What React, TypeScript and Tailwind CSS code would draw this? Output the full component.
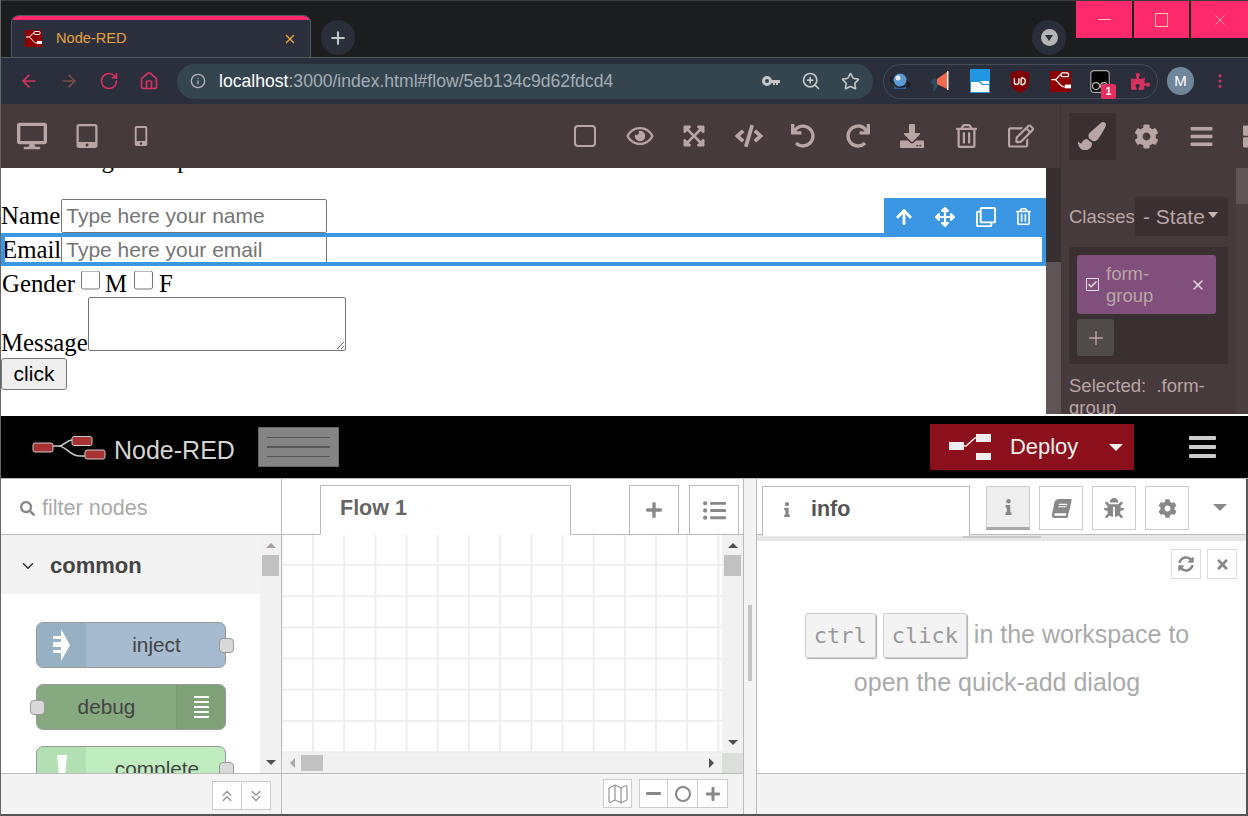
import type { ReactNode } from "react";
import { ArrowLeft, ArrowRight, RotateCw, House, Info, ZoomIn, Star, X, Plus, MoreVertical, ChevronDown, ChevronsUp, ChevronsDown, Map as MapIcon, Check } from "lucide-react";
import {
    FaDesktop, FaTabletAlt, FaMobileAlt, FaRegEye, FaExpandArrowsAlt, FaCode, FaUndo, FaRedo, FaDownload, FaRegTrashAlt,
    FaRegEdit, FaPaintBrush, FaCog, FaBars, FaThLarge, FaArrowUp, FaArrowsAlt, FaRegClone, FaPuzzlePiece, FaSearch,
    FaInfo, FaBook, FaBug, FaSyncAlt, FaTimes, FaListUl, FaPlus, FaMinus,
} from "react-icons/fa";

function RedLogo({ size = 17 }: { size?: number }) {
    return (
        <svg width={size} height={size} viewBox="0 0 17 17">
            <rect width="17" height="17" rx="1" fill="#8f0000" />
            <path d="M1 7h3c2 0 3-4 5-4M4 7c2 0 4 6 8 6" stroke="#fff" strokeWidth="1" fill="none" />
            <rect x="9" y="1.5" width="6" height="3" rx="1" fill="#8f0000" stroke="#fff" />
            <rect x="12" y="11" width="5" height="3" fill="#fff" />
        </svg>
    );
}

function ToolIcon({ children }: { children: ReactNode }) {
    return <div className="flex w-[54.5px] shrink-0 items-center justify-center text-[#b9a5a6]">{children}</div>;
}

function Ext({ children }: { children: ReactNode }) {
    return <div className="relative flex h-full w-[40px] shrink-0 items-center justify-center">{children}</div>;
}

function TabBar() {
    return (
        <div className="flex h-[58px] items-end border-t border-[#3c3c3c] border-b border-b-[#55585e] pl-[10px]">
            <div className="flex h-[42px] w-[300px] flex-col overflow-hidden rounded-t-lg border border-b-0 border-[#55585e] bg-[#2c303c]">
                <div className="h-[4px] bg-[#ff2a6d]" />
                <div className="flex flex-1 items-center pl-[13px] pr-[13px]">
                    <RedLogo />
                    <span className="ml-[14px] text-[14.6px] text-[#e6a13c]">Node-RED</span>
                    <X className="ml-auto h-[14px] w-[14px] text-[#e6a13c]" strokeWidth={2.5} />
                </div>
            </div>
            <div className="mb-[2px] ml-[10px] flex h-[35px] w-[34px] items-center justify-center rounded-full bg-[#2a2e38]">
                <Plus className="h-[20px] w-[20px] text-[#c4c7c5]" strokeWidth={2.5} />
            </div>
            <div className="mb-[2px] ml-auto flex h-[35px] w-[34px] items-center justify-center rounded-full bg-[#2a2e38]">
                <div className="flex h-[17px] w-[17px] items-center justify-center rounded-full bg-[#b5b5b5]">
                    <div className="h-0 w-0 border-x-[4px] border-t-[6px] border-x-transparent border-t-[#2a2e38]" />
                </div>
            </div>
            <div className="mb-[19px] ml-[10px] flex h-[37px] gap-[2px] self-end">
                <div className="flex w-[56px] items-center justify-center bg-[#ff2a6d]">
                    <div className="h-px w-[13px] bg-[#ffc4a8]" />
                </div>
                <div className="flex w-[55px] items-center justify-center bg-[#ff2a6d]">
                    <div className="h-[14px] w-[13px] border border-[#ffc4a8]" />
                </div>
                <div className="flex w-[57px] items-center justify-center bg-[#ff2a6d]">
                    <X className="h-[18px] w-[18px] text-[#ffc4a8]" strokeWidth={1} />
                </div>
            </div>
        </div>
    );
}

function AddressBar() {
    return (
        <div className="flex h-[46px] items-center bg-[#2b2f3b]">
            <div className="flex w-[176px] shrink-0 gap-[20px] pl-[18px]">
                <ArrowLeft className="h-[20px] w-[20px] text-[#d6325f]" />
                <ArrowRight className="h-[20px] w-[20px] text-[#7a4c46]" />
                <RotateCw className="h-[20px] w-[20px] text-[#d6325f]" />
                <House className="h-[20px] w-[20px] text-[#d6325f]" />
            </div>
            <div className="flex h-[35px] w-[696px] shrink-0 items-center rounded-full bg-[#354550] pl-[13px] pr-[13px]">
                <Info className="h-[16px] w-[16px] text-[#b0b4b8]" />
                <span className="ml-[13px] text-[17.6px] text-[#a3adb5]">
                    <span className="text-white">localhost</span>:3000/index.html#flow/5eb134c9d62fdcd4
                </span>
                <svg className="ml-auto" width="18" height="12" viewBox="0 0 18 12">
                    <circle cx="5" cy="6" r="3.5" fill="none" stroke="#c4c7c5" strokeWidth="3" />
                    <path d="M9 5h9v3h-2v2h-2V8h-1v2h-2V8H9z" fill="#c4c7c5" />
                </svg>
                <ZoomIn className="ml-[21px] h-[20px] w-[20px] text-[#c4c7c5]" />
                <Star className="ml-[20px] h-[19px] w-[19px] text-[#c4c7c5]" />
            </div>
            <div className="ml-[10px] flex h-[35px] w-[275px] shrink-0 items-center rounded-full border border-[#454b58]">
                <div className="flex h-full -ml-[4px]">
                    <Ext>
                        <svg width="22" height="20" viewBox="0 0 22 20">
                            <ellipse cx="11" cy="11" rx="10" ry="3.5" fill="none" stroke="#1a1a1a" strokeWidth="1.5" transform="rotate(20 11 11)" />
                            <circle cx="11" cy="9" r="6.5" fill="#5a9bd5" />
                            <circle cx="9" cy="7" r="2.5" fill="#e8e8e8" />
                            <path d="M5 15c4 3 8 3 12 0v3H5z" fill="#2d5fa0" />
                        </svg>
                    </Ext>
                    <Ext>
                        <svg width="20" height="22" viewBox="0 0 20 22">
                            <path d="M0 12l4-4 4 2v5l-3 6H3l1-6z" fill="#2d4a63" />
                            <path d="M7 9l10-7v17L7 14z" fill="#f36a4f" />
                            <rect x="17" y="1" width="1.5" height="19" fill="#eee" />
                        </svg>
                    </Ext>
                    <Ext>
                        <svg width="20" height="24" viewBox="0 0 20 24">
                            <rect width="20" height="24" rx="1" fill="#2196e3" />
                            <path d="M1 13h8l3 3h7v7H1z" fill="#fff" />
                            <path d="M10 12l3 3h6v-3z" fill="#fff" />
                        </svg>
                    </Ext>
                    <Ext>
                        <svg width="18" height="23" viewBox="0 0 16 20">
                            <path d="M8 0l8 2v9c0 5-4 7-8 9-4-2-8-4-8-9V2z" fill="#800000" />
                            <path d="M3 7v4c0 2 4 2 4 0V7M9 7v6M9 7c5-1 5 6 0 6" stroke="#fff" strokeWidth="1.2" fill="none" />
                        </svg>
                    </Ext>
                    <Ext>
                        <RedLogo size={21} />
                    </Ext>
                    <Ext>
                        <svg width="20" height="23" viewBox="0 0 17 20">
                            <rect x="0.5" y="0.5" width="16" height="19" rx="3" fill="#000" stroke="#aaa" />
                            <circle cx="5" cy="14" r="3" fill="none" stroke="#bbb" />
                            <circle cx="12" cy="14" r="3" fill="none" stroke="#bbb" />
                        </svg>
                        <div className="absolute left-[21px] top-[19px] flex h-[15px] w-[15px] items-center justify-center rounded-[2px] bg-[#e52f61] text-[10px] font-bold text-white">
                            1
                        </div>
                    </Ext>
                    <Ext>
                        <FaPuzzlePiece className="h-[19px] w-[19px] text-[#d6325f]" />
                    </Ext>
                </div>
            </div>
            <div className="ml-[9px] flex h-[28px] w-[27px] shrink-0 items-center justify-center rounded-full bg-[#6f8599] text-[15px] text-white">M</div>
            <MoreVertical className="ml-[17px] h-[18px] w-[18px] text-[#d6325f]" />
        </div>
    );
}

function BuilderToolbar() {
    return (
        <div className="flex h-[64px] items-center overflow-hidden bg-[#463a3c]">
            <div className="flex w-[557px] shrink-0 pl-[4px]">
                <ToolIcon><FaDesktop className="h-[30px] w-[30px]" /></ToolIcon>
                <ToolIcon><FaTabletAlt className="h-[24px] w-[24px]" /></ToolIcon>
                <ToolIcon><FaMobileAlt className="h-[20px] w-[20px]" /></ToolIcon>
            </div>
            <ToolIcon><div className="h-[22px] w-[22px] rounded-[4px] border-2 border-[#b9a5a6]" /></ToolIcon>
            <ToolIcon><FaRegEye className="h-[24px] w-[28px]" /></ToolIcon>
            <ToolIcon><FaExpandArrowsAlt className="h-[24px] w-[24px]" /></ToolIcon>
            <ToolIcon><FaCode className="h-[24px] w-[28px]" /></ToolIcon>
            <ToolIcon><FaUndo className="h-[24px] w-[24px]" /></ToolIcon>
            <ToolIcon><FaRedo className="h-[24px] w-[24px]" /></ToolIcon>
            <ToolIcon><FaDownload className="h-[24px] w-[24px]" /></ToolIcon>
            <ToolIcon><FaRegTrashAlt className="h-[24px] w-[21px]" /></ToolIcon>
            <ToolIcon><FaRegEdit className="h-[24px] w-[26px]" /></ToolIcon>
            <div className="ml-[11px] flex h-full shrink-0 items-center border-l border-[#3f3436] pl-[8px]">
                <div className="flex h-[47px] w-[47px] shrink-0 items-center justify-center rounded-[3px] bg-[#3a3031]">
                    <FaPaintBrush className="h-[28px] w-[28px] text-[#b9a5a6]" />
                </div>
                <div className="ml-[4px] flex">
                    <ToolIcon><FaCog className="h-[25px] w-[25px]" /></ToolIcon>
                    <ToolIcon><FaBars className="h-[25px] w-[25px]" /></ToolIcon>
                    <ToolIcon><FaThLarge className="h-[25px] w-[25px]" /></ToolIcon>
                </div>
            </div>
        </div>
    );
}

function FormPreview() {
    const inputCls = "w-[266px] rounded-[2px] border border-[#767676] bg-white px-[4px] font-['Liberation_Sans',sans-serif] text-[21px] placeholder:text-[#757575]";
    return (
        <div className="relative w-[1045px] shrink-0 overflow-hidden bg-white font-['Liberation_Serif',serif] text-[24.8px] leading-[28px] text-black">
            <div className="-mt-[22px] mb-[25px] h-[28px] whitespace-nowrap">Monitoring a sample</div>
            <div className="flex h-[34px] items-center whitespace-nowrap">
                Name<input className={`${inputCls} ml-px h-[34px]`} placeholder="Type here your name" readOnly />
            </div>
            <div className="relative flex h-[33px] items-center whitespace-nowrap pl-px">
                <span>Email</span>
                <input className={`${inputCls} h-[33px]`} placeholder="Type here your email" readOnly />
                <div className="pointer-events-none absolute inset-0 border-[4px] border-[#3b97e3]" />
                <div className="absolute -top-[35px] right-0 flex h-[37px] w-[162px] items-center bg-[#3b97e3] pl-[11px] text-white">
                    <FaArrowUp className="h-[18px] w-[18px]" />
                    <FaArrowsAlt className="ml-[22px] h-[20px] w-[20px]" />
                    <FaRegClone className="ml-[21px] h-[20px] w-[20px]" />
                    <FaRegTrashAlt className="ml-[20px] h-[17px] w-[15px]" />
                </div>
            </div>
            <div className="flex h-[32px] items-center whitespace-nowrap pl-px pt-[3px]">
                Gender
                <input type="checkbox" className="ml-[6px] h-[19px] w-[19px] -translate-y-[3.5px]" readOnly />
                <span className="ml-[5px]">M</span>
                <input type="checkbox" className="ml-[7px] h-[19px] w-[19px] -translate-y-[3.5px]" readOnly />
                <span className="ml-[6px]">F</span>
            </div>
            <div className="flex h-[60px] items-end pb-[1px] pt-[2px]">
                Message
                <textarea className="mb-[6px] h-[54px] w-[258px] rounded-[2px] border border-[#767676] bg-white" readOnly />
            </div>
            <button className="flex h-[32px] w-[66px] items-center justify-center rounded-[3px] border border-[#767676] bg-[#efefef] font-['Liberation_Sans',sans-serif] text-[21px]">
                click
            </button>
            <div className="h-[26px]" />
        </div>
    );
}

function StylePanel() {
    return (
        <div className="flex h-[246px] flex-1 self-start overflow-hidden bg-[#463a3c] text-[#b9a5a6]">
            <div className="flex w-[15px] flex-col">
                <div className="h-[94px] bg-[#372f30]" />
                <div className="flex-1 bg-[#5f5556]" />
            </div>
            <div className="flex-1 px-[8px] pt-[29px] text-[18.5px]">
                <div className="flex items-center justify-between">
                    <span>Classes</span>
                    <div className="flex h-[39px] w-[93px] items-center rounded-[3px] bg-[#3a3031] pl-[8px] text-[21px]">
                        - State
                        <div className="ml-[3px] h-0 w-0 -translate-y-[2px] border-x-[5px] border-t-[6px] border-x-transparent border-t-[#c7b5b6]" />
                    </div>
                </div>
                <div className="mt-[11px] h-[117px] rounded-[3px] bg-[#3a3031] p-[8px]">
                    <div className="flex h-[59px] w-[139px] items-center rounded-[3px] bg-[#804f7b] pl-[9px] pr-[10px]">
                        <div className="flex h-[13px] w-[13px] shrink-0 items-center justify-center border border-[#e6dbe4]">
                            <Check className="h-[11px] w-[11px] text-[#e6dbe4]" strokeWidth={3} />
                        </div>
                        <span className="ml-[7px] text-[18.5px] leading-[22px]">form-<br />group</span>
                        <X className="ml-auto h-[16px] w-[16px] text-[#e6dbe4]" />
                    </div>
                    <div className="mt-[5px] flex h-[37px] w-[37px] items-center justify-center rounded-[3px] bg-[#504a4a]">
                        <Plus className="h-[22px] w-[22px]" strokeWidth={1.5} />
                    </div>
                </div>
                <div className="mt-[11px] leading-[22px]">Selected:&nbsp; .form-<br />group</div>
            </div>
            <div className="w-[12px] bg-[#4a3f41]">
                <div className="h-[36px] bg-[#5f5556]" />
            </div>
        </div>
    );
}

function RedHeader() {
    return (
        <div className="flex h-[63px] items-center border-b border-[#bbb] bg-black">
            <svg className="ml-[31px] mt-[8px] h-[30px] w-[75px]" viewBox="0 0 75 30">
                <path d="M20 10h6c7 0 8-6 14-6h6M26 10c9 0 11 10 22 10h6" stroke="#ccc" strokeWidth="1.5" fill="none" />
                <rect x="1" y="7" width="20" height="9" rx="2" fill="#a73232" stroke="#ccc" />
                <rect x="40" y="0.5" width="20" height="9" rx="2" fill="#a73232" stroke="#ccc" />
                <rect x="53" y="14" width="20" height="9" rx="2" fill="#a73232" stroke="#ccc" />
            </svg>
            <span className="ml-[7px] mt-[8px] text-[25px] text-[#d4d4d4]">Node-RED</span>
            <div className="ml-[23px] flex h-[40px] w-[81px] flex-col items-center justify-center gap-[8px] border border-[#666] bg-[#848484]">
                <div className="h-px w-[63px] bg-[#555]" />
                <div className="h-[2px] w-[63px] bg-[#555]" />
                <div className="h-px w-[63px] bg-[#555]" />
            </div>
            <div className="ml-[591px] flex h-[46px] w-[204px] items-center bg-[#8c101c] pl-[19px]">
                <svg width="42" height="28" viewBox="0 0 42 28">
                    <rect y="9" width="15" height="8" fill="#eee" />
                    <rect x="27" y="1" width="15" height="8" fill="#eee" />
                    <rect x="27" y="20" width="15" height="7" fill="#eee" />
                    <path d="M14 13h3l9-8h2" stroke="#eee" strokeWidth="1.5" fill="none" />
                </svg>
                <span className="ml-[19px] -translate-y-px text-[22px] text-[#eee]">Deploy</span>
                <div className="ml-[31px] h-0 w-0 border-x-[7px] border-t-[7px] border-x-transparent border-t-[#eee]" />
            </div>
            <div className="ml-[55px] flex w-[27px] flex-col gap-[5px]">
                <div className="h-[4px] rounded-[1px] bg-[#ccc]" />
                <div className="h-[4px] rounded-[1px] bg-[#ccc]" />
                <div className="h-[4px] rounded-[1px] bg-[#ccc]" />
            </div>
        </div>
    );
}

function Arrow({ dir, color = "#555" }: { dir: "up" | "down" | "left" | "right"; color?: string }) {
    if (dir === "up") return <div className="h-0 w-0 border-x-[5px] border-b-[5px] border-x-transparent" style={{ borderBottomColor: color }} />;
    if (dir === "down") return <div className="h-0 w-0 border-x-[5px] border-t-[5px] border-x-transparent" style={{ borderTopColor: color }} />;
    if (dir === "left") return <div className="h-0 w-0 border-y-[5px] border-r-[5px] border-y-transparent" style={{ borderRightColor: color }} />;
    return <div className="h-0 w-0 border-y-[5px] border-l-[5px] border-y-transparent" style={{ borderLeftColor: color }} />;
}

function Port({ side }: { side: "left" | "right" }) {
    return (
        <div className={`absolute top-[15px] h-[15px] w-[15px] rounded-[4px] border border-[#999] bg-[#d9d9d9] ${side === "left" ? "-left-[7px]" : "-right-[9px]"}`} />
    );
}

function Palette() {
    return (
        <div className="flex w-[281px] shrink-0 flex-col border-r border-[#bbb] bg-white">
            <div className="flex h-[56px] items-center border-b border-[#bbb] pl-[19px] pt-[3px] text-[#aaa]">
                <FaSearch className="h-[15px] w-[15px] text-[#888]" />
                <span className="ml-[7px] text-[21.6px]">filter nodes</span>
            </div>
            <div className="flex h-[238px] overflow-hidden">
                <div className="w-[259px] overflow-hidden">
                    <div className="flex h-[59px] items-center bg-[#f3f3f3] pl-[18px] pt-[2px]">
                        <ChevronDown className="h-[18px] w-[18px] text-[#333]" strokeWidth={2} />
                        <span className="ml-[13px] text-[22px] font-bold text-[#444]">common</span>
                    </div>
                    <div className="flex flex-col gap-[16px] pl-[35px] pt-[28px]">
                        <div className="relative flex h-[46px] w-[190px] shrink-0 items-center rounded-[7px] border border-[#999] bg-[#a6bbcf]">
                            <div className="flex h-full w-[49px] items-center justify-center rounded-l-[6px] bg-[#98b0c3]">
                                <svg width="19" height="36" viewBox="0 0 19 36">
                                    <path d="M9 2l9 16-9 16V26H1v-3h8v-3H1v-5h8v-3H1V9h8z" fill="#fff" />
                                </svg>
                            </div>
                            <span className="flex-1 pl-[2px] text-center text-[20.8px] text-[#444]">inject</span>
                            <Port side="right" />
                        </div>
                        <div className="relative flex h-[46px] w-[190px] shrink-0 items-center rounded-[7px] border border-[#999] bg-[#87a980]">
                            <span className="flex-1 text-center text-[20.8px] text-[#444]">debug</span>
                            <div className="flex h-full w-[49px] flex-col items-center justify-center gap-[3px] rounded-r-[6px] border-l-2 border-[#7a9b76] bg-[#80a078]">
                                <div className="h-[2px] w-[15px] bg-white" />
                                <div className="h-[2px] w-[15px] bg-white" />
                                <div className="h-[2px] w-[15px] bg-white" />
                                <div className="h-[2px] w-[15px] bg-white" />
                                <div className="h-[2px] w-[15px] bg-white" />
                            </div>
                            <Port side="left" />
                        </div>
                        <div className="relative flex h-[46px] w-[190px] shrink-0 items-center rounded-[7px] border border-[#999] bg-[#c0edc0]">
                            <div className="flex h-full w-[49px] justify-center rounded-l-[6px] bg-[#b2e0b2] pt-[8px]">
                                <svg width="10" height="20" viewBox="0 0 10 20">
                                    <path d="M0 0h10l-2 20H2z" fill="#fff" />
                                </svg>
                            </div>
                            <span className="flex-1 pl-[3px] text-center text-[20.8px] text-[#444]">complete</span>
                            <Port side="right" />
                        </div>
                    </div>
                </div>
                <div className="flex w-[21px] flex-col items-center bg-[#f1f1f1] py-[8px]">
                    <Arrow dir="up" color="#a9a0a0" />
                    <div className="mt-[7px] h-[21px] w-[17px] bg-[#c1c1c1]" />
                    <div className="flex-1" />
                    <Arrow dir="down" color="#505050" />
                </div>
            </div>
            <div className="flex h-[41px] justify-end border-t border-[#bbb] bg-[#f3f3f3] pr-[10px] pt-[7px]">
                <div className="flex h-[29px] w-[59px] border border-[#ccc] bg-white text-[#999]">
                    <div className="flex flex-1 items-center justify-center border-r border-[#ccc]"><ChevronsUp className="h-[18px] w-[18px]" /></div>
                    <div className="flex flex-1 items-center justify-center"><ChevronsDown className="h-[18px] w-[18px]" /></div>
                </div>
            </div>
        </div>
    );
}

function Workspace() {
    return (
        <div className="flex w-[461px] shrink-0 flex-col bg-white">
            <div className="flex h-[56px] items-end border-b border-[#bbb] pl-[38px]">
                <div className="-mb-px flex h-[50px] w-[251px] items-center border border-[#bbb] border-b-white bg-white pb-[3px] pl-[19px] text-[21.5px] font-bold text-[#666]">
                    Flow 1
                </div>
                <div className="ml-[58px] flex h-[49px] w-[50px] items-center justify-center border border-b-0 border-[#bbb] text-[#888]">
                    <FaPlus className="h-[18px] w-[18px]" />
                </div>
                <div className="ml-[10px] flex h-[49px] w-[50px] items-center justify-center border border-b-0 border-[#bbb] text-[#888]">
                    <FaListUl className="h-[23px] w-[23px]" />
                </div>
            </div>
            <div className="flex h-[238px]">
                <div className="flex flex-1 flex-col">
                    <div className="flex-1 bg-[linear-gradient(#eeeeee_2px,transparent_2px),linear-gradient(90deg,#eeeeee_2px,transparent_2px)] bg-[size:31.2px_31.2px] bg-[position:30px_29px]" />
                    <div className="flex h-[20px] items-center bg-[#f1f1f1] px-[8px]">
                        <Arrow dir="left" color="#aaa" />
                        <div className="ml-[6px] h-[16px] w-[22px] bg-[#c1c1c1]" />
                        <div className="flex-1" />
                        <Arrow dir="right" color="#505050" />
                    </div>
                </div>
                <div className="flex w-[21px] flex-col items-center bg-[#f1f1f1]">
                    <div className="mt-[8px]"><Arrow dir="up" color="#505050" /></div>
                    <div className="mt-[7px] h-[21px] w-[17px] bg-[#c1c1c1]" />
                    <div className="flex-1" />
                    <div className="mb-[8px]"><Arrow dir="down" color="#505050" /></div>
                    <div className="h-[20px] w-full bg-[#dcdedc]" />
                </div>
            </div>
            <div className="flex h-[41px] items-start justify-end border-t border-[#bbb] bg-[#f3f3f3] pr-[15px] pt-[5px] text-[#888]">
                <div className="flex h-[29px] w-[29px] items-center justify-center border border-[#ccc] bg-white">
                    <MapIcon className="h-[24px] w-[24px] text-[#999]" strokeWidth={1.25} />
                </div>
                <div className="ml-[7px] flex h-[29px] w-[89px] border border-[#ccc] bg-white">
                    <div className="flex w-[28px] items-center justify-center border-r border-[#ccc]"><FaMinus className="h-[17px] w-[17px]" /></div>
                    <div className="flex w-[30px] items-center justify-center border-r border-[#ccc]">
                        <div className="h-[16px] w-[16px] rounded-full border-2 border-[#888]" />
                    </div>
                    <div className="flex flex-1 items-center justify-center"><FaPlus className="h-[16px] w-[16px]" /></div>
                </div>
            </div>
        </div>
    );
}

function SideTab({ children, active, width = 44 }: { children: ReactNode; active?: boolean; width?: number }) {
    return (
        <div
            className={`flex h-[44px] items-center justify-center border border-[#ccc] text-[#888] ${active ? "border-b-[3px] border-b-[#aaa] bg-[#eee] text-[#555]" : "bg-white"}`}
            style={{ width }}
        >
            {children}
        </div>
    );
}

function Kbd({ children }: { children: ReactNode }) {
    return (
        <span className="rounded-[3px] border border-[#ccc] bg-[#f3f3f3] px-[8px] py-[9px] font-['DejaVu_Sans_Mono',monospace] text-[22px] text-[#999] shadow-[1px_1px_1px_#aaa]">
            {children}
        </span>
    );
}

function InfoSidebar() {
    return (
        <div className="flex flex-1 flex-col border-l border-[#bbb] bg-white">
            <div className="flex h-[56px] items-start border-b border-[#bbb] pl-[5px] pt-[7px]">
                <div className="relative h-[49px] w-[208px] bg-white">
                    <div className="flex h-[50px] items-center border border-b-0 border-[#bbb] bg-white pb-[4px] pl-[20px]">
                        <FaInfo className="h-[15px] w-[8px] text-[#888]" />
                        <span className="ml-[20px] text-[21.5px] font-bold text-[#555]">info</span>
                    </div>
                </div>
                <div className="ml-[16px] flex">
                    <SideTab active><FaInfo className="h-[16px] w-[9px]" /></SideTab>
                    <div className="w-[9px]" />
                    <SideTab><FaBook className="h-[19px] w-[19px] -skew-x-12" /></SideTab>
                    <div className="w-[9px]" />
                    <SideTab><FaBug className="h-[20px] w-[20px]" /></SideTab>
                    <div className="w-[9px]" />
                    <SideTab><FaCog className="h-[19px] w-[19px]" /></SideTab>
                </div>
                <div className="ml-[24px] mt-[18px] h-0 w-0 border-x-[7px] border-t-[7px] border-x-transparent border-t-[#888]" />
            </div>
            <div className="flex h-[6px] justify-center bg-[#e6e6e6]">
                <div className="mt-px h-[2px] w-[78px] bg-[#c8c8c8]" />
            </div>
            <div className="flex h-[232px] flex-col pr-[9px]">
                <div className="mt-[8px] flex justify-end gap-[6px] text-[#888]">
                    <div className="flex h-[30px] w-[30px] items-center justify-center border border-[#ddd]"><FaSyncAlt className="h-[16px] w-[16px]" /></div>
                    <div className="flex h-[30px] w-[30px] items-center justify-center border border-[#ddd]"><FaTimes className="h-[15px] w-[15px]" /></div>
                </div>
                <div className="mt-[32px] text-center text-[25px] leading-[47px] text-[#aaa]">
                    <div className="whitespace-nowrap"><Kbd>ctrl</Kbd> <Kbd>click</Kbd> in the workspace to</div>
                    <div>open the quick-add dialog</div>
                </div>
            </div>
            <div className="h-[41px] border-t border-[#bbb] bg-[#f3f3f3]" />
        </div>
    );
}

export default function App() {
    return (
        <div className="flex h-[816px] w-[1248px] flex-col overflow-hidden border-l border-[#666] bg-[#1c1d1f] font-['Liberation_Sans',sans-serif]">
            <TabBar />
            <AddressBar />
            <BuilderToolbar />
            <div className="flex h-[248px] overflow-hidden bg-white">
                <FormPreview />
                <StylePanel />
            </div>
            <RedHeader />
            <div className="flex h-[335px] border-r-2 border-[#555]">
                <Palette />
                <Workspace />
                <div className="flex w-[13px] shrink-0 items-start border-l border-[#bbb] bg-[#f3f3f3] pl-[4px] pt-[126px]">
                    <div className="h-[76px] w-[4px] bg-[#c4c4c4]" />
                </div>
                <InfoSidebar />
            </div>
            <div className="h-[2px] bg-[#555]" />
        </div>
    );
}
